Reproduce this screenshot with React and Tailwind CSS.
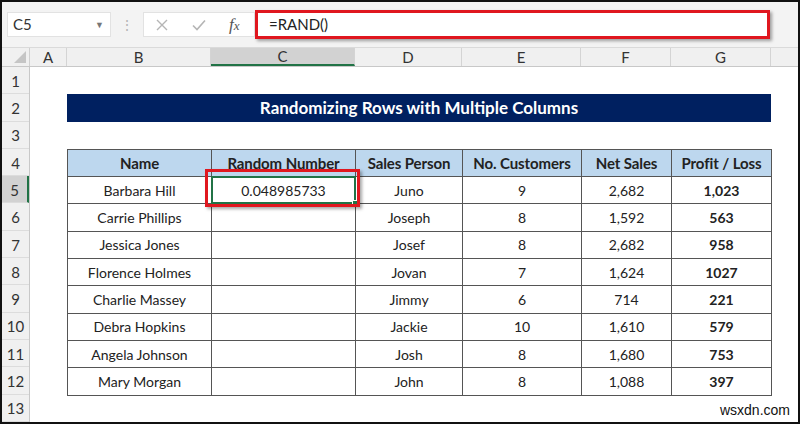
import React from "react";

const cols = [
  { key: "A", w: 37 },
  { key: "B", w: 144 },
  { key: "C", w: 144 },
  { key: "D", w: 107 },
  { key: "E", w: 119 },
  { key: "F", w: 90 },
  { key: "G", w: 100 },
];

const rows = [
  ["Barbara Hill", "0.048985733", "Juno", "9", "2,682", "1,023"],
  ["Carrie Phillips", "", "Joseph", "8", "1,592", "563"],
  ["Jessica Jones", "", "Josef", "8", "2,682", "958"],
  ["Florence Holmes", "", "Jovan", "7", "1,624", "1027"],
  ["Charlie Massey", "", "Jimmy", "6", "714", "221"],
  ["Debra Hopkins", "", "Jackie", "10", "1,610", "579"],
  ["Angela Johnson", "", "Josh", "8", "1,680", "753"],
  ["Mary Morgan", "", "John", "8", "1,088", "397"],
];

const headers = ["Name", "Random Number", "Sales Person", "No. Customers", "Net Sales", "Profit / Loss"];
const widths = ["w-[144px]", "w-[144px]", "w-[107px]", "w-[119px]", "w-[90px]", "w-[100px]"];

const CellFont = { fontFamily: "Lato, 'Open Sans', sans-serif" };

export default function App() {
  return (
    <div
      className="relative w-[800px] h-[424px] border-2 border-[#111] bg-white overflow-hidden"
      style={CellFont}
    >
      {/* formula bar */}
      <div className="h-[46px] bg-[#f3f3f3] flex items-center border-b border-[#dadada]">
        <div className="ml-[5px] w-[104px] h-[25px] bg-white border border-[#e2e2e2] flex items-center justify-between px-[5px] text-[15px] text-[#333]">
          <span>C5</span>
          <span className="text-[9px] text-[#777] mr-[1px]">▼</span>
        </div>
        <div className="w-[32px] flex justify-center text-[#b5b5b5] text-[14px]">⋮</div>
        <div className="w-[112px] h-[25px] bg-white border border-[#e2e2e2] flex items-center text-[#b8b8b8]">
          <svg className="ml-[11px]" width="14" height="14" viewBox="0 0 14 14">
            <path d="M2 2 L12 12 M12 2 L2 12" stroke="#b5b5b5" strokeWidth="1.4" fill="none" />
          </svg>
          <svg className="ml-[22px]" width="16" height="14" viewBox="0 0 16 14">
            <path d="M2 7.5 L6 11.5 L14 2.5" stroke="#b5b5b5" strokeWidth="1.6" fill="none" />
          </svg>
          <span
            className="ml-[22px] text-[17px] italic text-[#555]"
            style={{ fontFamily: "'Liberation Serif', serif" }}
          >
            f<span className="text-[13px]">x</span>
          </span>
        </div>
        <div className="relative flex-1 h-[29px] mr-[28px] bg-white border-[3px] border-[#e0171f] shadow-[2px_2px_3px_rgba(0,0,0,0.35)] flex items-center pl-[11px] text-[15px] text-[#222]">
          =RAND()
        </div>
      </div>

      {/* column header row */}
      <div className="h-[19px] flex bg-[#f0f0f0] border-b border-[#c8c8c8] text-[15px] text-[#333]">
        <div className="w-[28px] relative border-r border-[#d0d0d0]">
          <div className="absolute right-[3px] bottom-[3px] w-0 h-0 border-l-[12px] border-l-transparent border-b-[12px] border-b-[#c5c5c5]" />
        </div>
        {cols.map((c) => (
          <div
            key={c.key}
            style={{ width: c.w }}
            className={
              "flex items-center justify-center border-r border-[#d4d4d4] leading-none " +
              (c.key === "C" ? "bg-[#d2d2d2] border-b-2 border-b-[#217346]" : "")
            }
          >
            {c.key}
          </div>
        ))}
        <div className="flex-1" />
      </div>

      {/* body */}
      <div className="flex">
        <div className="w-[28px] bg-[#f0f0f0] border-r border-[#c8c8c8] flex flex-col text-[15px] text-[#333]">
          {Array.from({ length: 13 }, (_, i) => (
            <div
              key={i}
              className={
                "h-[27.3px] flex items-end justify-center pb-[1px] border-b border-[#dcdcdc] " +
                (i === 4 ? "bg-[#d2d2d2] border-r-2 border-r-[#217346]" : "")
              }
            >
              {i + 1}
            </div>
          ))}
        </div>

        <div className="relative flex-1 pl-[37px]">
          <div className="h-[27.3px]" />
          <div className="w-[704px] h-[27.3px] bg-[#002060] text-white font-bold text-[17px] flex items-center justify-center">
            Randomizing Rows with Multiple Columns
          </div>
          <div className="h-[27.3px]" />
          <table className="border-collapse text-[14px] text-[#222]">
            <thead>
              <tr className="h-[27.3px] bg-[#bdd7ee]">
                {headers.map((h, i) => (
                  <th key={h} className={widths[i] + " border border-[#555] font-bold text-[15px] p-0 text-center tracking-[-0.1px]"}>
                    {h}
                  </th>
                ))}
              </tr>
            </thead>
            <tbody>
              {rows.map((r) => (
                <tr key={r[0]} className="h-[27.3px]">
                  {r.map((v, i) => (
                    <td
                      key={i}
                      className={
                        "border border-[#555] p-0 text-center " + (i === 5 ? "font-bold" : "")
                      }
                    >
                      {v}
                    </td>
                  ))}
                </tr>
              ))}
            </tbody>
          </table>

          {/* selection on C5 */}
          <div className="absolute left-[181px] top-[109px] w-[145px] h-[28px] border-2 border-[#217346]">
            <div className="absolute -right-[4px] -bottom-[4px] w-[6px] h-[6px] bg-[#217346] border border-white" />
          </div>
          <div className="absolute left-[175px] top-[102px] w-[155px] h-[38px] border-[3px] border-[#e0171f] shadow-[2px_2px_3px_rgba(0,0,0,0.35)]" />
        </div>
      </div>

      <div
        className="absolute right-[8px] bottom-[1px] text-[14px] text-[#111]"
        style={{ fontFamily: "'Liberation Sans', Arial, sans-serif" }}
      >
        wsxdn.com
      </div>
    </div>
  );
}
